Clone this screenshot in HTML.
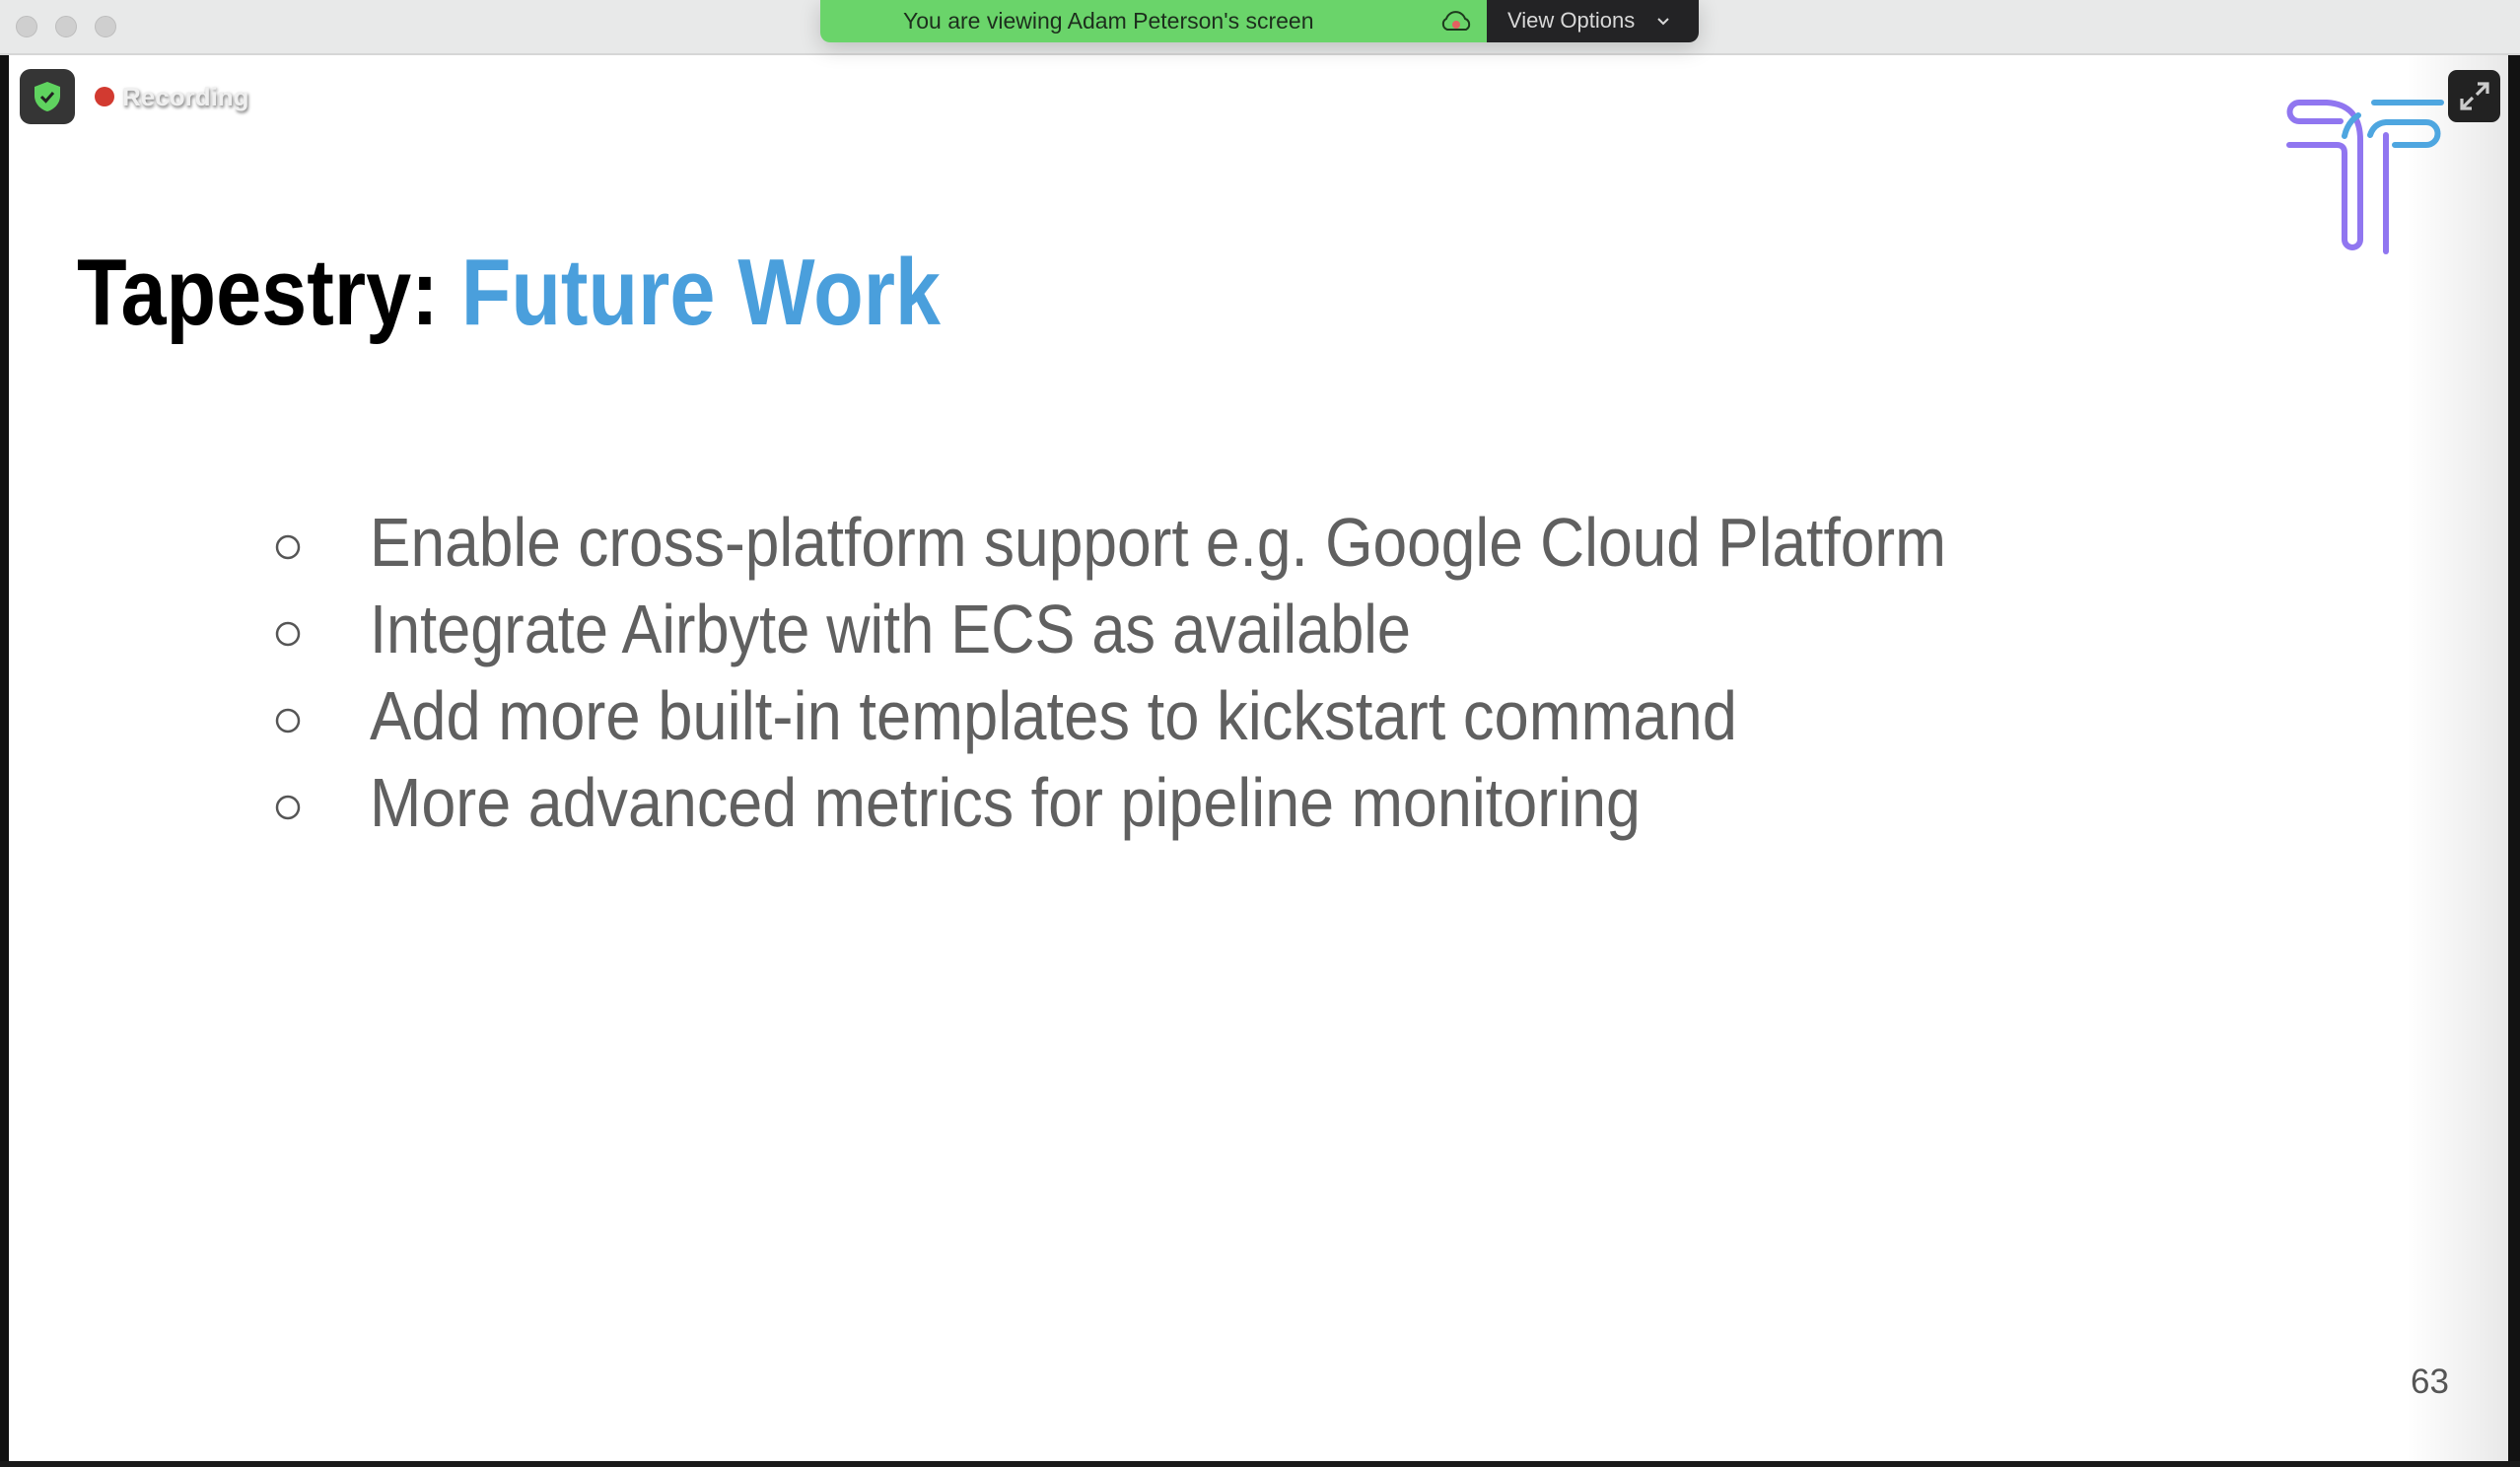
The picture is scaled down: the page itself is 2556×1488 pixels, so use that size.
<!DOCTYPE html>
<html><head><meta charset="utf-8"><style>
*{margin:0;padding:0;box-sizing:border-box}
body{width:2556px;height:1488px;overflow:hidden;background:#fff;position:relative;font-family:"Liberation Sans",sans-serif}
.tb{position:absolute;left:0;top:0;width:2556px;height:56px;background:#e8e9e9;border-bottom:2px solid #d6d6d6}
.tl{position:absolute;top:16px;width:22px;height:22px;border-radius:50%;background:#cfcfcf;border:1px solid #bdbdbd}
.lb{position:absolute;left:0;top:56px;width:9px;height:1432px;background:#111}
.rb{position:absolute;left:2544px;top:56px;width:12px;height:1432px;background:#121212}
.bb{position:absolute;left:0;top:1482px;width:2556px;height:6px;background:#1a1a1a}
.rg{position:absolute;left:2440px;top:56px;width:104px;height:1426px;background:linear-gradient(90deg,rgba(0,0,0,0),rgba(0,0,0,0.09))}
.ban{position:absolute;left:832px;top:0;width:891px;height:43px;border-radius:0 0 10px 10px;overflow:hidden;box-shadow:0 6px 22px rgba(0,0,0,0.18)}
.g{position:absolute;left:0;top:0;width:676px;height:43px;background:#6ad46a}
.d{position:absolute;left:676px;top:0;width:215px;height:43px;background:#232325}
.t{position:absolute;white-space:nowrap}
.fit{transform-origin:0 0}
</style></head><body>
<div class="tb"></div>
<div class="tl" style="left:16px"></div><div class="tl" style="left:56px"></div><div class="tl" style="left:96px"></div>
<div class="ban"><div class="g"></div><div class="d"></div>
<div class="t" style="left:84px;top:8px;font-size:23px;color:#1d2e1d">You are viewing Adam Peterson's screen</div>
<svg style="position:absolute;left:628px;top:8px" width="34" height="28" viewBox="0 0 34 28"><path d="M8 22 A6 6 0 0 1 7 11 A10 10 0 0 1 26 11 A6 6 0 0 1 27 22 Z" fill="none" stroke="#1d3a1d" stroke-width="2"/><circle cx="17" cy="17" r="4" fill="#e46060"/></svg>
<div class="t" style="left:697px;top:8px;font-size:22px;color:#d8d8d8">View Options</div>
<svg style="position:absolute;left:847px;top:15px" width="16" height="12" viewBox="0 0 16 12"><path d="M3 4 L8 9 L13 4" fill="none" stroke="#d8d8d8" stroke-width="2"/></svg>
</div>
<div class="lb"></div><div class="rg"></div><div class="rb"></div><div class="bb"></div>
<div style="position:absolute;left:20px;top:70px;width:56px;height:56px;border-radius:11px;background:#353535"></div>
<svg style="position:absolute;left:32px;top:81px" width="32" height="34" viewBox="0 0 32 34"><path d="M16 2 L29 7 V16 C29 24 23 30 16 32 C9 30 3 24 3 16 V7 Z" fill="#5fd35f"/><path d="M10 17 L14.5 21.5 L22 13" fill="none" stroke="#222" stroke-width="3"/></svg>
<div style="position:absolute;left:96px;top:88px;width:20px;height:20px;border-radius:50%;background:#d23a30"></div>
<div class="t" style="left:124px;top:83px;font-size:26px;font-weight:bold;color:#f0f0f0;text-shadow:1px 2px 3px rgba(0,0,0,0.55)">Recording</div>
<div style="position:absolute;left:2483px;top:71px;width:53px;height:53px;border-radius:9px;background:#222"></div>
<svg style="position:absolute;left:2483px;top:71px" width="53" height="53" viewBox="0 0 53 53"><path d="M30 14 H40 V24 M40 14 L29 25 M14 29 V39 H24 M14 39 L25 28" fill="none" stroke="#ccc" stroke-width="3.2"/></svg>
<svg style="position:absolute;left:2250px;top:50px" width="306" height="230" viewBox="0 0 306 230" fill="none" stroke-width="6" stroke-linecap="round">
<path d="M72 97 H120 Q128 97 128 105 V193 A8 8 0 0 0 144 193 V92 Q144 56 110 54 H82 A9.5 9.5 0 0 0 82 73 H124" stroke="#9076f0"/>
<path d="M170 87 V205" stroke="#9076f0"/>
<path d="M158 54 H226" stroke="#4ea6e0"/>
<path d="M128 88 Q131 74 142 67" stroke="#4ea6e0"/>
<path d="M154 87 Q158 75 170 74 H211 A11.5 11.5 0 0 1 211 97 H179" stroke="#4ea6e0"/>
</svg>
<div class="t fit" data-w="876" style="left:78px;top:242px;font-size:96px;font-weight:bold;color:#000;line-height:110px">Tapestry: <span style="color:#4a9fdc">Future Work</span></div>
<svg style="position:absolute;left:270px;top:520px" width="50" height="360" viewBox="0 0 50 360" fill="none" stroke="#555" stroke-width="2.5">
<circle cx="22" cy="35" r="11"/><circle cx="22" cy="123" r="11"/><circle cx="22" cy="211" r="11"/><circle cx="22" cy="299" r="11"/></svg>
<div class="t fit" data-w="1599" style="left:375px;top:510px;font-size:70px;color:#606060;line-height:80px">Enable cross-platform support e.g. Google Cloud Platform</div>
<div class="t fit" data-w="1056" style="left:375px;top:598px;font-size:70px;color:#606060;line-height:80px">Integrate Airbyte with ECS as available</div>
<div class="t fit" data-w="1387" style="left:375px;top:686px;font-size:70px;color:#606060;line-height:80px">Add more built-in templates to kickstart command</div>
<div class="t fit" data-w="1289" style="left:375px;top:774px;font-size:70px;color:#606060;line-height:80px">More advanced metrics for pipeline monitoring</div>
<div class="t" style="left:2445px;top:1382px;font-size:35px;color:#555">63</div>
<script>
document.querySelectorAll('.fit').forEach(function(e){var w=+e.dataset.w;var c=e.getBoundingClientRect().width;e.style.transform='scaleX('+(w/c)+')';});
</script>
</body></html>
